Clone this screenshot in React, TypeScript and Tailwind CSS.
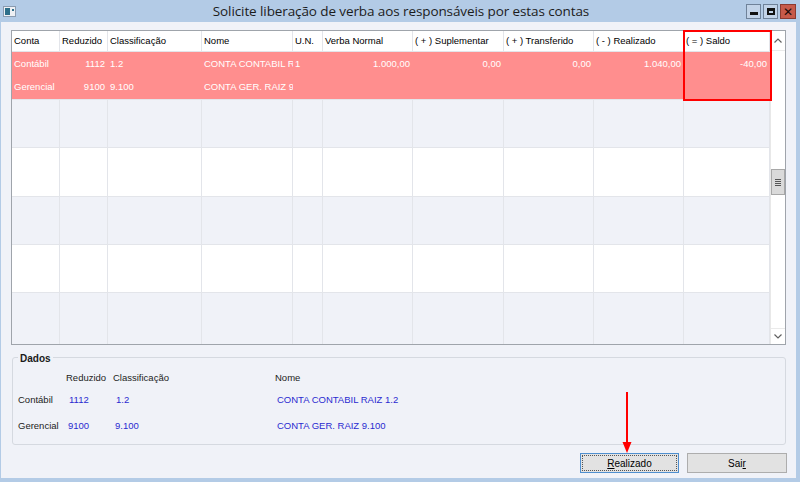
import React from "react";

const cols = [
  { w: 48, label: "Conta" },
  { w: 48, label: "Reduzido" },
  { w: 94, label: "Classificação" },
  { w: 91, label: "Nome" },
  { w: 30, label: "U.N." },
  { w: 90, label: "Verba Normal" },
  { w: 91, label: "( + ) Suplementar" },
  { w: 90, label: "( + ) Transferido" },
  { w: 90, label: "( - ) Realizado" },
  { w: 86, label: "( = ) Saldo" },
];

function EmptyRow({ bg, h }: { bg: string; h: string }) {
  return (
    <div className={`flex ${h} ${bg} border-b border-[#e3e5ea]`}>
      {cols.map((c, i) => (
        <div key={i} style={{ width: c.w }} className="shrink-0 border-r border-[#e3e5ea]" />
      ))}
    </div>
  );
}

export default function App() {
  return (
    <div className="w-[800px] h-[482px] bg-[#b3cbe6] flex flex-col font-['Liberation_Sans',Arial,sans-serif] text-[9.5px] text-black overflow-hidden">
      {/* Title bar */}
      <div className="h-[22px] shrink-0 relative flex items-center justify-center">
        <div className="absolute left-[3px] top-[6px] w-[13px] h-[11px] bg-[#eef0f4] border border-[#8a9bb0] flex items-center pl-[1px]">
          <div className="w-[5px] h-[7px] bg-[#2e6f8a]" />
          <div className="w-[2px] h-[2px] bg-[#2e6f8a] ml-[2px] mt-[-4px]" />
        </div>
        <span className="font-['Open_Sans',sans-serif] text-[13.5px] text-[#1c1c1c] tracking-[-0.1px] mt-[1px] ml-[2px]">
          Solicite liberação de verba aos responsáveis por estas contas
        </span>
        <div className="absolute right-[4px] top-[4px] flex gap-[2px]">
          <div className="w-[15px] h-[15px] bg-[#c2d3e8] border border-[#6f8299] flex items-end justify-center pb-[3px]">
            <div className="w-[8px] h-[3px] bg-[#111]" />
          </div>
          <div className="w-[15px] h-[15px] bg-[#c2d3e8] border border-[#6f8299] flex items-center justify-center">
            <div className="w-[8px] h-[7px] border-[2px] border-[#111] border-t-[3px]" />
          </div>
          <div className="w-[16px] h-[15px] bg-[#c75a4a] border border-[#8c3a30] flex items-center justify-center text-[#1a0a08] text-[12px] font-bold leading-none font-['DejaVu_Sans',sans-serif]">
            ✕
          </div>
        </div>
      </div>

      {/* Content */}
      <div className="flex-1 ml-[1px] mr-[4px] mb-[4px] bg-[#f0f2f8] relative flex flex-col px-[10px] pt-[8px]">
        {/* Grid */}
        <div className="h-[315px] shrink-0 border border-[#9fa4ab] bg-white flex">
          <div className="flex flex-col w-[758px] shrink-0">
            {/* header */}
            <div className="flex h-[21px] shrink-0 bg-white border-b border-[#e3e5ea]">
              {cols.map((c, i) => (
                <div key={i} style={{ width: c.w }} className="shrink-0 border-r border-[#e3e5ea] flex items-center pl-[2px] whitespace-nowrap overflow-hidden">
                  {c.label}
                </div>
              ))}
            </div>
            {/* pink row */}
            <div className="h-[48px] shrink-0 bg-[#ff8e8e] text-white flex flex-col border-b border-[#e3e5ea]">
              <div className="flex h-[24px] items-center">
                <div className="w-[48px] shrink-0 pl-[2px]">Contábil</div>
                <div className="w-[48px] shrink-0 text-right pr-[3px]">1112</div>
                <div className="w-[94px] shrink-0 pl-[2px]">1.2</div>
                <div className="w-[91px] shrink-0 pl-[2px] pr-[1px] whitespace-nowrap overflow-hidden">CONTA CONTABIL RAIZ 1.2</div>
                <div className="w-[30px] shrink-0 pl-[2px]">1</div>
                <div className="w-[90px] shrink-0 text-right pr-[3px]">1.000,00</div>
                <div className="w-[91px] shrink-0 text-right pr-[3px]">0,00</div>
                <div className="w-[90px] shrink-0 text-right pr-[3px]">0,00</div>
                <div className="w-[90px] shrink-0 text-right pr-[3px]">1.040,00</div>
                <div className="w-[86px] shrink-0 text-right pr-[3px]">-40,00</div>
              </div>
              <div className="flex h-[24px] items-center">
                <div className="w-[48px] shrink-0 pl-[2px]">Gerencial</div>
                <div className="w-[48px] shrink-0 text-right pr-[3px]">9100</div>
                <div className="w-[94px] shrink-0 pl-[2px]">9.100</div>
                <div className="w-[91px] shrink-0 pl-[2px] pr-[1px] whitespace-nowrap overflow-hidden">CONTA GER. RAIZ 9.100</div>
              </div>
            </div>
            <EmptyRow bg="bg-[#f0f2f8]" h="h-[48px]" />
            <EmptyRow bg="bg-white" h="h-[49px]" />
            <EmptyRow bg="bg-[#f0f2f8]" h="h-[48px]" />
            <EmptyRow bg="bg-white" h="h-[48px]" />
            <div className="flex flex-1 bg-[#f0f2f8]">
              {cols.map((c, i) => (
                <div key={i} style={{ width: c.w }} className="shrink-0 border-r border-[#e3e5ea]" />
              ))}
            </div>
          </div>
          {/* scrollbar */}
          <div className="flex-1 flex flex-col bg-white border-l border-[#e8e8e8]">
            <div className="h-[20px] flex items-center justify-center border-b border-[#eaeaea]">
              <svg width="8" height="5" viewBox="0 0 8 5"><path d="M0.5 4.5 L4 1 L7.5 4.5" fill="none" stroke="#606060" strokeWidth="1.2" /></svg>
            </div>
            <div className="h-[118px]" />
            <div className="h-[26px] bg-[#dadada] border border-[#a8a8a8] flex flex-col items-center justify-center gap-[1px]">
              <div className="w-[6px] h-[1px] bg-[#555]" />
              <div className="w-[6px] h-[1px] bg-[#555]" />
              <div className="w-[6px] h-[1px] bg-[#555]" />
              <div className="w-[6px] h-[1px] bg-[#555]" />
            </div>
            <div className="flex-1" />
            <div className="h-[16px] flex items-center justify-center border-t border-[#eaeaea]">
              <svg width="8" height="5" viewBox="0 0 8 5"><path d="M0.5 0.5 L4 4 L7.5 0.5" fill="none" stroke="#606060" strokeWidth="1.2" /></svg>
            </div>
          </div>
        </div>

        {/* Dados group */}
        <div className="relative mt-[12px] h-[88px] shrink-0 border border-[#d5d9e0] rounded-[3px] ml-[1px]">
          <div className="absolute left-[5px] top-[-7px] px-[2px] bg-[#f0f2f8] font-bold text-[10px] text-[#1a1a1a]">Dados</div>
          <div className="grid grid-cols-[48px_47px_162px_1fr] pl-[5px] pt-[13px] text-[9.5px] text-[#222]">
            <div className="h-[22px]" />
            <div className="h-[22px]">Reduzido</div>
            <div className="h-[22px]">Classificação</div>
            <div className="h-[22px]">Nome</div>

            <div className="h-[26px]">Contábil</div>
            <div className="h-[26px] pl-[3px] text-[#2a2ad0]">1112</div>
            <div className="h-[26px] pl-[3px] text-[#2a2ad0]">1.2</div>
            <div className="h-[26px] pl-[2px] text-[#2a2ad0]">CONTA CONTABIL RAIZ 1.2</div>

            <div>Gerencial</div>
            <div className="pl-[2px] text-[#2a2ad0]">9100</div>
            <div className="pl-[2px] text-[#2a2ad0]">9.100</div>
            <div className="pl-[2px] text-[#2a2ad0]">CONTA GER. RAIZ 9.100</div>
          </div>
        </div>

        {/* Buttons */}
        <div className="flex justify-end gap-[8px] mt-[8px] mr-[-1px]">
          <div className="w-[99px] h-[20px] border border-[#4f8fcf] bg-[#e2e2e2] p-[1px]">
            <div className="w-full h-full border border-dotted border-[#555] flex items-center justify-center text-[10px]">
              <span><span className="underline">R</span>ealizado</span>
            </div>
          </div>
          <div className="w-[100px] h-[20px] border border-[#adadad] bg-[#e2e2e2] flex items-center justify-center text-[10px]">
            <span>Sai<span className="underline">r</span></span>
          </div>
        </div>

        {/* Red highlight box over Saldo column */}
        <div className="absolute left-[682px] top-[8px] w-[89px] h-[71px] border-[2px] border-[#ff0000] pointer-events-none" />

        {/* Red arrow */}
        <svg className="absolute left-[620px] top-[370px]" width="14" height="62" viewBox="0 0 14 62">
          <line x1="6" y1="0" x2="6" y2="52" stroke="#ff0000" strokeWidth="2" />
          <path d="M1.5 50 L6 61 L10.5 50 Z" fill="#ff0000" />
        </svg>
      </div>
    </div>
  );
}
